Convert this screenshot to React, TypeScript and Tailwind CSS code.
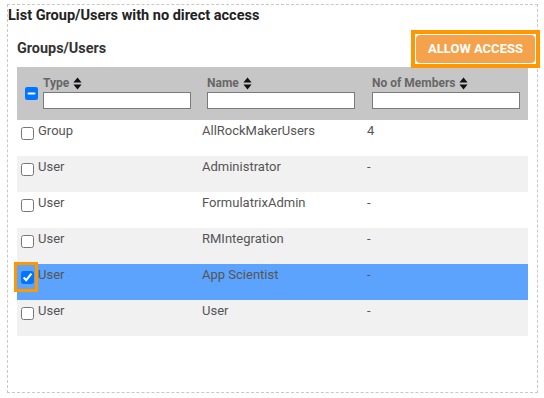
import { useEffect, useRef } from "react";

type Row = {
  type: string;
  name: string;
  members: string;
  selected?: boolean;
};

const rows: Row[] = [
  { type: "Group", name: "AllRockMakerUsers", members: "4" },
  { type: "User", name: "Administrator", members: "-" },
  { type: "User", name: "FormulatrixAdmin", members: "-" },
  { type: "User", name: "RMIntegration", members: "-" },
  { type: "User", name: "App Scientist", members: "-", selected: true },
  { type: "User", name: "User", members: "-" },
];

const SortIcon = () => (
  <svg width="9" height="13" viewBox="0 0 9 13" className="ml-[4px] shrink-0">
    <path d="M4.5 0.5 L8.6 5.4 H0.4 Z M0.4 7.6 H8.6 L4.5 12.5 Z" fill="#111" />
  </svg>
);

const HeaderCell = ({ label }: { label: string }) => (
  <div className="px-[8px] pt-[8px]">
    <div className="flex items-center h-[16px] text-[12px] leading-[16px] font-bold text-[#666]">
      {label}
      <SortIcon />
    </div>
    <input
      type="text"
      className="mt-[1px] block w-[148px] h-[17px] border border-[#7a7a7a] bg-white"
    />
  </div>
);

export default function App() {
  const allRef = useRef<HTMLInputElement>(null);

  useEffect(() => {
    if (allRef.current) allRef.current.indeterminate = true;
  }, []);

  return (
    <div className="w-[544px] h-[398px] bg-white overflow-hidden font-['Roboto','Liberation_Sans',sans-serif]">
      <div className="ml-[7px] mt-[4px] w-[531px] h-[389px] border border-dashed border-[#c8c8c8]">
        {/* title */}
        <h2 className="mt-[2px] text-[14.5px] leading-[18px] font-bold text-[#222]">
          List Group/Users with no direct access
        </h2>

        {/* heading + action */}
        <div className="mt-[10px] h-[28px] flex items-center justify-between pl-[9px] pr-[2px]">
          <h3 className="text-[14.4px] leading-[18px] font-bold text-[#333]">Groups/Users</h3>
          <div className="-m-[5px] border-4 border-[#ff9800] p-[1px]">
            <button className="block w-[119px] h-[28px] rounded-[4px] bg-[#f5a24c] text-white text-[13px] font-bold uppercase">
              Allow Access
            </button>
          </div>
        </div>

        {/* table */}
        <div className="mt-[4px] mx-[9px] w-[511px]">
          <div className="grid grid-cols-[18px_164px_165px_164px] h-[53px] bg-[#c6c6c6]">
            <div className="flex items-center">
              <input
                ref={allRef}
                type="checkbox"
                className="ml-[8px] mr-0 my-0 w-[13px] h-[13px] shrink-0"
              />
            </div>
            <HeaderCell label="Type" />
            <HeaderCell label="Name" />
            <HeaderCell label="No of Members" />
          </div>

          {rows.map((row, i) => (
            <div
              key={i}
              className={`grid grid-cols-[18px_164px_165px_164px] h-[36px] text-[13px] leading-[16px] text-[#555] ${
                row.selected ? "bg-[#5ca3fd]" : i % 2 === 1 ? "bg-[#f1f1f1]" : "bg-white"
              }`}
            >
              <div
                className={`mt-[1px] h-[24px] flex items-start pt-[6px] ${
                  row.selected ? "outline-3 outline-solid outline-[#ff9800]" : ""
                }`}
              >
                <input
                  type="checkbox"
                  defaultChecked={row.selected}
                  className="ml-[4px] w-[13px] h-[13px] shrink-0"
                />
              </div>
              <div className="pl-[3px] pt-[3px]">{row.type}</div>
              <div className="pl-[3px] pt-[3px]">{row.name}</div>
              <div className="pl-[3px] pt-[3px]">{row.members}</div>
            </div>
          ))}
        </div>
      </div>
    </div>
  );
}
